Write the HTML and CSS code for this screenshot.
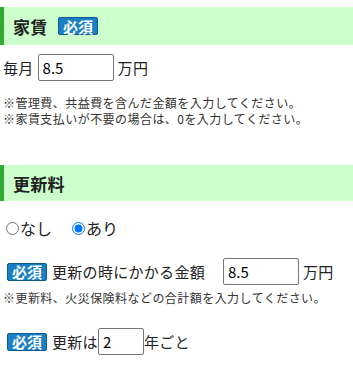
FILE: index.html
```html
<!DOCTYPE html>
<html lang="ja">
<head>
    <meta charset="UTF-8">
    <meta name="viewport" content="width=device-width, initial-scale=1.0">
    <title>家賃・更新料</title>
    <link rel="stylesheet" href="styles.css">
</head>
<body>
    <div class="section-title first"><span class="title-text rent-title">家賃</span><span class="badge">必須</span></div>
    <div class="row rent-row">
        <span>毎月</span>
        <input type="text" class="input-money" value="8.5">
        <span>万円</span>
    </div>
    <p class="note">※管理費、共益費を含んだ金額を入力してください。<br>※家賃支払いが不要の場合は、0を入力してください。</p>

    <div class="section-title second"><span class="title-text">更新料</span></div>
    <div class="radios">
        <label class="radio-label"><input type="radio" name="renew">なし</label>
        <label class="radio-label"><input type="radio" name="renew" checked>あり</label>
    </div>
    <div class="row renew-row">
        <span class="badge">必須</span>
        <span class="label-long">更新の時にかかる金額</span>
        <input type="text" class="input-money" value="8.5">
        <span>万円</span>
    </div>
    <p class="note note-renew">※更新料、火災保険料などの合計額を入力してください。</p>
    <div class="row cycle-row">
        <span class="badge">必須</span>
        <span class="label-short">更新は</span>
        <input type="text" class="input-year" value="2">
        <span>年ごと</span>
    </div>
</body>
</html>
```

FILE: styles.css
```css
body {
    margin: 0;
    font-family: "Noto Sans CJK JP", "Noto Sans", sans-serif;
    font-size: 15px;
    color: #222222;
    background: #ffffff;
}

.section-title {
    display: flex;
    align-items: center;
    height: 37px;
    padding-left: 9px;
    border-left: 4px solid #33aa33;
    background-color: #ccffcc;
    font-size: 17px;
    font-weight: bold;
    color: #222222;
}

.section-title.first {
    margin-top: 7px;
    height: 38px;
}

.section-title.second {
    margin-top: 38px;
    height: 36px;
}

.title-text {
    letter-spacing: 0.3px;
}

.rent-title {
    flex: none;
    width: 35px;
    white-space: nowrap;
}

.badge {
    display: inline-flex;
    flex: none;
    align-items: center;
    justify-content: center;
    box-sizing: border-box;
    width: 40px;
    height: 18px;
    background-color: #1a80c4;
    border: 1px solid #0d5a8e;
    border-radius: 2px;
    color: #ffffff;
    font-size: 15px;
    font-weight: bold;
    line-height: 1;
    letter-spacing: 0;
}

.section-title .badge {
    margin-left: 10px;
}

.row {
    display: flex;
    align-items: center;
    padding-left: 3px;
    letter-spacing: 0.3px;
}

.row input {
    box-sizing: border-box;
    height: 27px;
    border: 1px solid #767676;
    border-radius: 2px;
    padding: 0 4px;
    font-family: "Noto Sans CJK JP", sans-serif;
    font-size: 15px;
    letter-spacing: 0;
    color: #000000;
}

.input-money {
    width: 76px;
}

.input-year {
    width: 46px;
}

.rent-row {
    margin-top: 9px;
}

.rent-row input {
    margin: 0 4px 0 4px;
}

.note {
    margin: 14px 0 0 0;
    padding-left: 3px;
    font-size: 12px;
    line-height: 16px;
    letter-spacing: 0.45px;
    color: #333333;
}

.radios {
    display: flex;
    align-items: center;
    margin-top: 15px;
    height: 24px;
}

.radio-label {
    display: flex;
    align-items: center;
    margin-right: 14px;
    font-size: 16px;
}

.radio-label input {
    margin: 0 1px 0 6px;
    width: 13px;
    height: 13px;
}

.renew-row {
    margin-top: 18px;
    padding-left: 7px;
}

.label-long {
    margin-left: 5px;
    width: 171px;
}

.renew-row input {
    margin-right: 4px;
}

.note-renew {
    margin-top: 5px;
}

.cycle-row {
    margin-top: 22px;
    padding-left: 7px;
}

.label-short {
    margin-left: 5px;
}
```
